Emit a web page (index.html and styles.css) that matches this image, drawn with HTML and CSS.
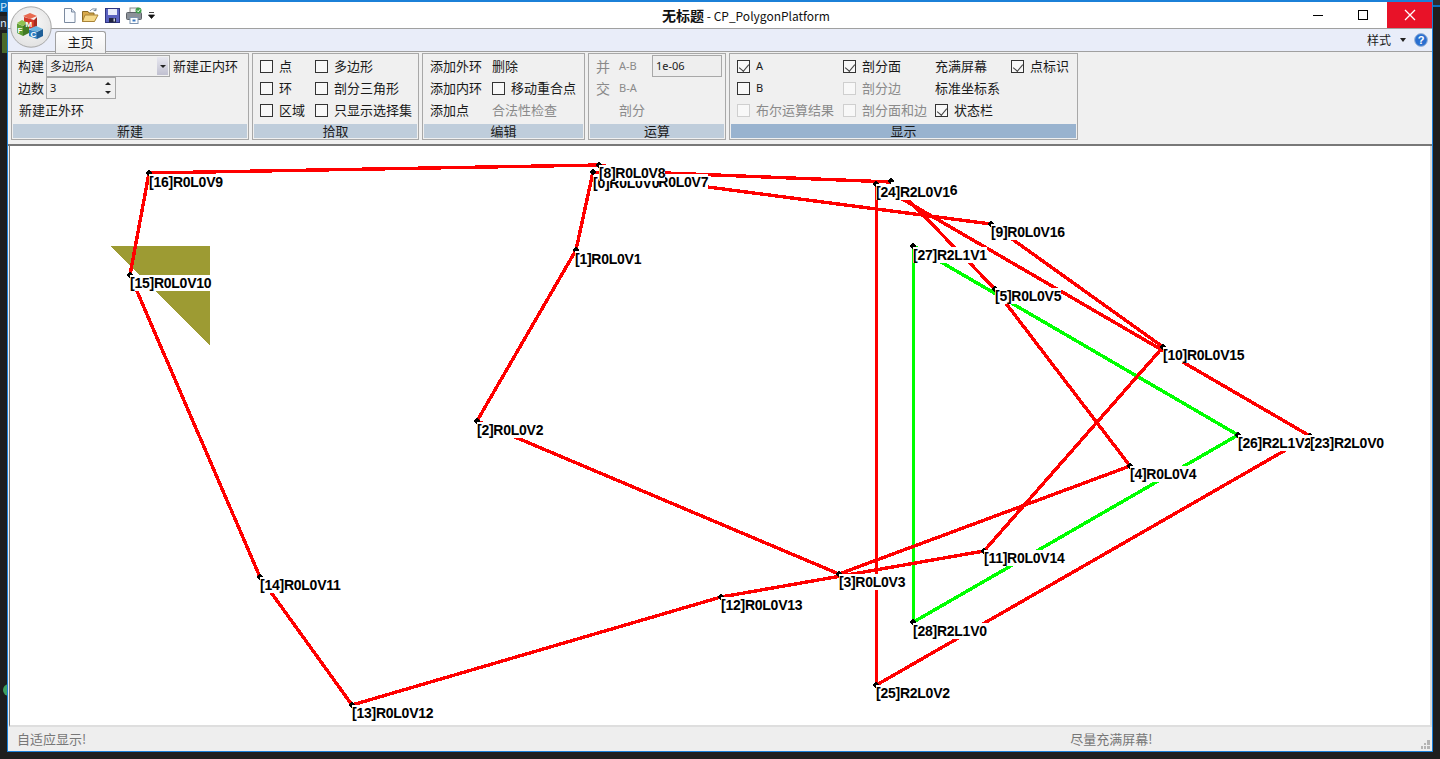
FILE: index.html
```html
<!DOCTYPE html>
<html lang="zh-CN">
<head>
  <meta charset="UTF-8">
  <title>无标题 - CP_PolygonPlatform</title>
  <link rel="stylesheet" href="styles.css">
</head>
<body>

<!-- 窗口后面的桌面 -->
<div class="behind behind-left-top">P</div>
<div class="behind behind-left-n">n</div>
<div class="behind behind-left-green"></div>
<div class="behind behind-left-circle"></div>
<div class="behind behind-right-top"></div>

<div class="window">

  <!-- 标题栏 -->
  <div class="titlebar">
    <div class="qat">
      <svg class="qat-icon" width="13" height="15" viewBox="0 0 13 15">
        <path d="M1.500 .5H8.500L12 4V14.500H1.500Z" fill="#f8fbff" stroke="#7b8aa0"/>
        <path d="M8.500 .5V4H12" fill="#d5e0ee" stroke="#7b8aa0"/>
      </svg>
      <svg class="qat-icon" width="17" height="14" viewBox="0 0 17 14">
        <path d="M.5 3.500H6L7 5H12V13.500H.5Z" fill="#d9a94a" stroke="#8a6a24"/>
        <path d="M3 7H16L12.500 13.500H.5Z" fill="#f5d98a" stroke="#a98336"/>
        <path d="M8 3C10 .5 12 .5 14 1.500M14 .2V2.600H11.600" fill="none" stroke="#6f8296"/>
      </svg>
      <svg class="qat-icon" width="15" height="15" viewBox="0 0 15 15">
        <rect x=".5" y=".5" width="14" height="14" fill="#5a62c0" stroke="#2f3580"/>
        <rect x="3" y="1" width="9" height="6" fill="#e8ecfa"/>
        <rect x="4" y="10" width="7" height="4.500" fill="#20243f"/>
        <rect x="8.500" y="10.500" width="1.500" height="3" fill="#c8cce0"/>
      </svg>
      <svg class="qat-icon qat-print" width="17" height="17" viewBox="0 0 17 17">
        <rect x="4" y="1" width="8" height="5" fill="#f4f4f4" stroke="#888"/>
        <rect x=".5" y="5.500" width="15" height="7" rx="1" fill="#8b9098" stroke="#5d6268"/>
        <rect x="4" y="10.500" width="8" height="6" fill="#fff" stroke="#7d93b0"/>
        <rect x="6.500" y="12.500" width="3" height="2" fill="#3b78c0"/>
        <circle cx="12.500" cy="3.500" r="3" fill="#3f9d4a"/>
        <path d="M11 3.500L12.200 4.800L14 2.400" fill="none" stroke="#fff"/>
      </svg>
      <svg class="qat-drop" width="7" height="7" viewBox="0 0 7 7">
        <path d="M1 .5H6M.5 3H6.500L3.500 6.500Z" fill="#111" stroke="#111" stroke-width=".8"/>
      </svg>
    </div>
    <div class="title"><b>无标题</b> - CP_PolygonPlatform</div>
    <div class="winbtns">
      <span class="winbtn"><i class="win-min"></i></span>
      <span class="winbtn"><i class="win-max"></i></span>
      <span class="winbtn winbtn-close">
        <svg width="12" height="12" viewBox="0 0 12 12"><path d="M1 1L11 11M11 1L1 11" stroke="#fff" stroke-width="1.300"/></svg>
      </span>
    </div>
  </div>

  <!-- 应用按钮 -->
  <div class="appbtn">
    <svg width="42" height="42" viewBox="0 0 42 42">
      <defs>
        <radialGradient id="orb" cx="50%" cy="40%" r="60%">
          <stop offset="0" stop-color="#fafafa"/>
          <stop offset="1" stop-color="#e2e2e2"/>
        </radialGradient>
      </defs>
      <circle cx="21" cy="21" r="20.200" fill="url(#orb)" stroke="#a8a8a8"/>
      <!-- M -->
      <path d="M13 10L20 7L27 10L20 13Z" fill="#e86a50"/>
      <path d="M14 11L24 14V24L14 21Z" fill="#d23a2a"/>
      <path d="M24 14L27 11V20L24 24Z" fill="#a82c1e"/>
      <!-- F -->
      <path d="M7 17L12 14L18 17L13 20Z" fill="#8fc050"/>
      <path d="M7 17.500L13 20V30L7 27Z" fill="#5f9e35"/>
      <path d="M13 20L19 17V27L13 30Z" fill="#437a24"/>
      <!-- C -->
      <path d="M19 23L26 20L33 23L26 26Z" fill="#6fb4e0"/>
      <path d="M19 23.500L27 26V33L19 30Z" fill="#2f7fbf"/>
      <path d="M27 26L33 23V30L27 33Z" fill="#1f5f98"/>
      <text class="cube-letter" x="15.500" y="21">M</text>
      <text class="cube-letter" x="7.500" y="27">F</text>
      <text class="cube-letter" x="20.500" y="31">C</text>
    </svg>
  </div>

  <!-- 选项卡 -->
  <div class="tabstrip">
    <div class="tab">主页</div>
    <div class="tab-right">
      <span>样式</span>
      <svg width="6" height="4" viewBox="0 0 6 4"><path d="M0 0H6L3 4Z" fill="#222"/></svg>
      <svg class="help" width="14" height="14" viewBox="0 0 14 14">
        <circle cx="7" cy="7" r="6.400" fill="#2a6fd0" stroke="#9ab4d8"/>
        <text class="help-q" x="7" y="11">?</text>
      </svg>
    </div>
  </div>

  <!-- 功能区 -->
  <div class="ribbon">

    <section class="group group-new">
      <div class="group-body">
        <span>构建</span>
        <div class="combo"><span>多边形A</span><i class="combo-btn"></i></div>
        <span class="after-combo">新建正内环</span>
        <span>边数</span>
        <div class="spin"><span>3</span><i class="spin-btn"></i></div>
        <span></span>
        <span class="span-all">新建正外环</span>
      </div>
      <div class="group-title">新建</div>
    </section>

    <section class="group group-pick">
      <div class="group-body">
        <label class="check"><i class="box"></i>点</label>
        <label class="check"><i class="box"></i>多边形</label>
        <label class="check"><i class="box"></i>环</label>
        <label class="check"><i class="box"></i>剖分三角形</label>
        <label class="check"><i class="box"></i>区域</label>
        <label class="check"><i class="box"></i>只显示选择集</label>
      </div>
      <div class="group-title">拾取</div>
    </section>

    <section class="group group-edit">
      <div class="group-body">
        <span>添加外环</span>
        <span>删除</span>
        <span>添加内环</span>
        <label class="check"><i class="box"></i>移动重合点</label>
        <span>添加点</span>
        <span class="off">合法性检查</span>
      </div>
      <div class="group-title">编辑</div>
    </section>

    <section class="group group-calc">
      <div class="group-body">
        <span class="off big">并</span>
        <span class="off latin">A-B</span>
        <div class="tol">1e-06</div>
        <span class="off big">交</span>
        <span class="off latin">B-A</span>
        <span></span>
        <span></span>
        <span class="off">剖分</span>
        <span></span>
      </div>
      <div class="group-title">运算</div>
    </section>

    <section class="group group-show">
      <div class="group-body">
        <label class="check"><i class="box on"></i><span class="latin">A</span></label>
        <label class="check"><i class="box on"></i>剖分面</label>
        <span>充满屏幕</span>
        <label class="check"><i class="box on"></i>点标识</label>
        <label class="check"><i class="box"></i><span class="latin">B</span></label>
        <label class="check off"><i class="box"></i>剖分边</label>
        <span>标准坐标系</span>
        <span></span>
        <label class="check off"><i class="box"></i>布尔运算结果</label>
        <label class="check off"><i class="box"></i>剖分面和边</label>
        <label class="check"><i class="box on"></i>状态栏</label>
        <span></span>
      </div>
      <div class="group-title group-title-active">显示</div>
    </section>

  </div>

  <!-- 画布 -->
  <div class="canvas">
    <svg class="drawing" width="1420" height="580" viewBox="10 146 1420 580">
      <polygon class="fill-a" points="110,246 210,246 210,346"/>

      <!-- R2L1 -->
      <polygon class="ring-green" points="913.500,246 913.500,622 1238,435"/>
      <!-- R0L0 -->
      <polygon class="ring-red" points="593,172 576,250 477,421 839,574 1130,466 995,289 891,182 641,172 599,165 149,173 130,275 260,577 352,705 721,597 984,551 1163,347 991,224"/>
      <!-- R2L0 -->
      <polygon class="ring-red" points="1310,436 876.500,184 876.500,685"/>

      <g class="dots">
        <circle cx="149" cy="173" r="2.800"/>
        <circle cx="593" cy="172" r="2.800"/>
        <circle cx="599" cy="165" r="2.800"/>
        <circle cx="891" cy="181" r="2.800"/>
        <circle cx="876" cy="184" r="2.800"/>
        <circle cx="991" cy="224" r="2.800"/>
        <circle cx="913" cy="246" r="2.800"/>
        <circle cx="576" cy="250" r="2.800"/>
        <circle cx="130" cy="275" r="2.800"/>
        <circle cx="995" cy="289" r="2.800"/>
        <circle cx="1163" cy="347" r="2.800"/>
        <circle cx="477" cy="421" r="2.800"/>
        <circle cx="1238" cy="435" r="2.800"/>
        <circle cx="1310" cy="436" r="2.800"/>
        <circle cx="1130" cy="466" r="2.800"/>
        <circle cx="984" cy="551" r="2.800"/>
        <circle cx="839" cy="574" r="2.800"/>
        <circle cx="260" cy="577" r="2.800"/>
        <circle cx="721" cy="597" r="2.800"/>
        <circle cx="913" cy="622" r="2.800"/>
        <circle cx="876" cy="685" r="2.800"/>
        <circle cx="352" cy="705" r="2.800"/>
      </g>
    </svg>

    <!-- 点标识，坐标相对画布 -->
    <span class="pt" style="left:632px;top:28px">[7]R0L0V7</span>
    <span class="pt" style="left:583px;top:29px">[0]R0L0V0</span>
    <span class="pt" style="left:589px;top:19px">[8]R0L0V8</span>
    <span class="pt" style="left:881px;top:36px">[6]R0L0V6</span>
    <span class="pt" style="left:866px;top:38px">[24]R2L0V1</span>
    <span class="pt" style="left:139px;top:28px">[16]R0L0V9</span>
    <span class="pt" style="left:981px;top:78px">[9]R0L0V16</span>
    <span class="pt" style="left:903px;top:101px">[27]R2L1V1</span>
    <span class="pt" style="left:565px;top:105px">[1]R0L0V1</span>
    <span class="pt" style="left:120px;top:129px">[15]R0L0V10</span>
    <span class="pt" style="left:985px;top:142px">[5]R0L0V5</span>
    <span class="pt" style="left:1153px;top:201px">[10]R0L0V15</span>
    <span class="pt" style="left:467px;top:276px">[2]R0L0V2</span>
    <span class="pt" style="left:1228px;top:289px">[26]R2L1V2</span>
    <span class="pt" style="left:1300px;top:289px">[23]R2L0V0</span>
    <span class="pt" style="left:1120px;top:320px">[4]R0L0V4</span>
    <span class="pt" style="left:974px;top:404px">[11]R0L0V14</span>
    <span class="pt" style="left:829px;top:428px">[3]R0L0V3</span>
    <span class="pt" style="left:250px;top:431px">[14]R0L0V11</span>
    <span class="pt" style="left:711px;top:451px">[12]R0L0V13</span>
    <span class="pt" style="left:903px;top:477px">[28]R2L1V0</span>
    <span class="pt" style="left:866px;top:539px">[25]R2L0V2</span>
    <span class="pt" style="left:342px;top:559px">[13]R0L0V12</span>
  </div>

  <!-- 状态栏 -->
  <div class="statusbar">
    <span class="status-left">自适应显示!</span>
    <span class="status-right">尽量充满屏幕!</span>
    <svg class="grip" width="9" height="9" viewBox="0 0 9 9">
      <path d="M6 0h3v3H6zM3 3h2v2H3zM6 3h3v2H6zM0 6h2v3H0zM3 6h2v3H3zM6 6h3v3H6z" fill="#b4b4b4"/>
    </svg>
  </div>
</div>

</body>
</html>
```

FILE: styles.css
```css
/* 基本 */
* {
  box-sizing: border-box;
}

html,
body {
  height: 100%;
}

body {
  margin: 0;
  overflow: hidden;
  background-color: #1e1e1e;
  font-family: "Noto Sans CJK SC", "Noto Sans", sans-serif;
  font-size: 13px;
  color: #1a1a1a;
}

/* 桌面残留部分 */
.behind {
  position: absolute;
  overflow: hidden;
  font-size: 11px;
  line-height: 12px;
  color: #d8e8f8;
}

.behind-left-top {
  left: 0;
  top: 0;
  width: 7px;
  height: 12px;
  background-color: #0a70c0;
}

.behind-left-n {
  left: 0;
  top: 16px;
  width: 7px;
  height: 14px;
  background-color: #2d2d30;
}

.behind-left-green {
  left: 2px;
  top: 33px;
  width: 5px;
  height: 20px;
  background-color: #4a6a2a;
}

.behind-left-circle {
  left: 3px;
  top: 684px;
  width: 12px;
  height: 12px;
  border-radius: 50%;
  background-color: #3fa060;
}

.behind-right-top {
  right: 0;
  top: 0;
  width: 7px;
  height: 7px;
  border-bottom: 2px solid #0a70c0;
  background-color: #2d2d30;
}

/* 窗口 */
.window {
  position: relative;
  z-index: 1;
  display: flex;
  flex-direction: column;
  width: 1426px;
  height: 752px;
  margin-left: 7px;
  border: 1px solid #1b80d8;
  border-top-width: 2px;
  background-color: #eeeeee;
}

/* 标题栏 */
.titlebar {
  display: grid;
  grid-template-columns: 1fr auto 1fr;
  align-items: start;
  height: 27px;
  background-color: #fff;
  border-bottom: 1px solid #a0a0a0;
}

.qat {
  display: flex;
  align-items: center;
  height: 26px;
  padding-left: 55px;
}

.qat-icon {
  margin-right: 6px;
}

.qat-print {
  margin-right: 5px;
}

.title {
  padding-top: 4px;
  padding-left: 52px;
  font-size: 12px;
  line-height: 18px;
  color: #111;
}

.title b {
  font-size: 14px;
}

.winbtns {
  display: flex;
  justify-content: flex-end;
}

.winbtn {
  display: flex;
  align-items: center;
  justify-content: center;
  width: 45px;
  height: 26px;
}

.winbtn-close {
  background-color: #e81228;
}

.win-min {
  width: 10px;
  height: 1px;
  margin-right: 3px;
  background-color: #000;
}

.win-max {
  width: 10px;
  height: 10px;
  margin-right: 3px;
  border: 1px solid #000;
}

.appbtn {
  position: absolute;
  left: 2px;
  top: 4px;
  z-index: 3;
  width: 42px;
  height: 42px;
}

.cube-letter {
  font-family: "Liberation Sans", sans-serif;
  font-size: 8px;
  font-weight: 700;
  fill: #fff;
}

/* 选项卡 */
.tabstrip {
  position: relative;
  display: flex;
  justify-content: space-between;
  height: 23px;
  padding-left: 47px;
  padding-top: 2px;
  background-color: #e9edf9;
  border-bottom: 1px solid #a0a0a0;
}

.tab {
  width: 51px;
  height: 22px;
  border: 1px solid #a0a0a0;
  border-bottom: 0;
  border-radius: 3px 3px 0 0;
  background: linear-gradient(#ffffff, #f0f0f0);
  font-size: 13px;
  line-height: 20px;
  text-align: center;
}

.tab-right {
  display: flex;
  align-items: center;
  gap: 9px;
  height: 17px;
  margin-right: 4px;
  font-size: 12px;
}

.tab-right .help {
  margin-left: -1px;
}

.help-q {
  font-family: "Liberation Sans", sans-serif;
  font-size: 11px;
  font-weight: 700;
  fill: #fff;
  text-anchor: middle;
}

/* 功能区 */
.ribbon {
  display: flex;
  gap: 3px;
  height: 94px;
  padding: 1px 0 0 3px;
  background-color: #f0f0f0;
  border-bottom: 2px solid #787878;
}

.group {
  display: flex;
  flex-direction: column;
  height: 87px;
  border: 1px solid #a8a8a8;
  background-color: #f0f0f0;
}

.group-new { width: 238px; }
.group-pick { width: 167px; }
.group-edit { width: 163px; }
.group-calc { width: 138px; }
.group-show { width: 349px; }

.group-body {
  display: grid;
  flex: 1;
  grid-template-rows: repeat(3, 22px);
  align-items: center;
  padding: 1px 0 0 7px;
  line-height: 22px;
  white-space: nowrap;
}

.group-new .group-body { grid-template-columns: 28px 127px 1fr; padding-left: 6px; }
.group-pick .group-body { grid-template-columns: 55px 1fr; }
.group-edit .group-body { grid-template-columns: 62px 1fr; }
.group-calc .group-body { grid-template-columns: 23px 33px 1fr; }
.group-show .group-body { grid-template-columns: 106px 92px 76px 1fr; }

.group-title {
  height: 14px;
  margin: 0 1px 1px;
  background-color: #bfcddb;
  font-size: 13px;
  line-height: 14px;
  text-align: center;
}

.group-title-active {
  background-color: #99b3cf;
}

.span-all {
  grid-column: 1 / -1;
  padding-left: 1px;
}

.off {
  color: #8a8a8a;
}

.off .box {
  border-color: #cfcfcf;
}

.big {
  font-size: 14px;
}

.latin {
  font-family: "Noto Sans", sans-serif;
  font-size: 11px;
}

.check {
  display: flex;
  align-items: center;
  gap: 6px;
}

.box {
  position: relative;
  flex: none;
  width: 13px;
  height: 13px;
  border: 1px solid #333;
  background-color: #f8f8f8;
}

.box.on::after {
  content: "";
  position: absolute;
  left: 3px;
  top: 1px;
  width: 5px;
  height: 8px;
  border: solid #444;
  border-width: 0 1px 1px 0;
  transform: rotate(40deg);
}

.combo,
.spin {
  position: relative;
  display: flex;
  align-items: center;
  height: 22px;
  padding-left: 3px;
  border: 1px solid #a8a8a8;
  background-color: #f0f0f0;
  font-size: 12px;
}

.combo {
  width: 124px;
}

.spin {
  width: 70px;
  font-family: "Noto Sans", sans-serif;
  font-size: 11px;
}

.combo-btn {
  position: absolute;
  right: 1px;
  top: 1px;
  width: 11px;
  height: 18px;
  background: linear-gradient(#e8e8f0, #c0c0d0);
}

.combo-btn::after {
  content: "";
  position: absolute;
  left: 3px;
  top: 8px;
  border: 3px solid transparent;
  border-top-color: #222;
  border-bottom-width: 0;
}

.spin-btn {
  position: absolute;
  right: 4px;
  top: 3px;
  width: 6px;
  height: 14px;
}

.spin-btn::before,
.spin-btn::after {
  content: "";
  position: absolute;
  left: 0;
  border: 3px solid transparent;
}

.spin-btn::before {
  top: 1px;
  border-bottom-color: #222;
  border-top-width: 0;
}

.spin-btn::after {
  bottom: 1px;
  border-top-color: #222;
  border-bottom-width: 0;
}

.tol {
  width: 70px;
  height: 22px;
  padding-left: 3px;
  border: 1px solid #a8a8a8;
  background-color: #eeeeee;
  font-family: "Noto Sans", sans-serif;
  font-size: 11px;
  line-height: 20px;
}

/* 画布 */
.canvas {
  position: relative;
  flex: 1;
  margin-left: 1px;
  overflow: hidden;
  background-color: #fff;
  border-left: 1px solid #787878;
  border-right: 2px solid #dedede;
  border-bottom: 2px solid #dedede;
}

.drawing {
  position: absolute;
  left: 0;
  top: 0;
}

.fill-a {
  fill: #9d9b33;
  shape-rendering: crispEdges;
}

.ring-red,
.ring-green {
  fill: none;
  stroke-width: 3.400;
  shape-rendering: crispEdges;
}

.ring-red {
  stroke: #ff0000;
}

.ring-green {
  stroke: #00ff00;
}

.dots {
  fill: #000;
  shape-rendering: crispEdges;
}

.pt {
  position: absolute;
  height: 16px;
  background-color: #fff;
  font-family: "Liberation Sans", sans-serif;
  font-size: 14px;
  font-weight: 700;
  letter-spacing: -0.25px;
  line-height: 16px;
  color: #000;
  white-space: nowrap;
}

/* 状态栏 */
.statusbar {
  position: relative;
  display: flex;
  align-items: center;
  height: 24px;
  padding: 0 0 2px 9px;
  background-color: #eeeeee;
  font-size: 13px;
  color: #777;
}

.status-right {
  margin-left: 984px;
}

.grip {
  position: absolute;
  right: 2px;
  bottom: 2px;
}
```
